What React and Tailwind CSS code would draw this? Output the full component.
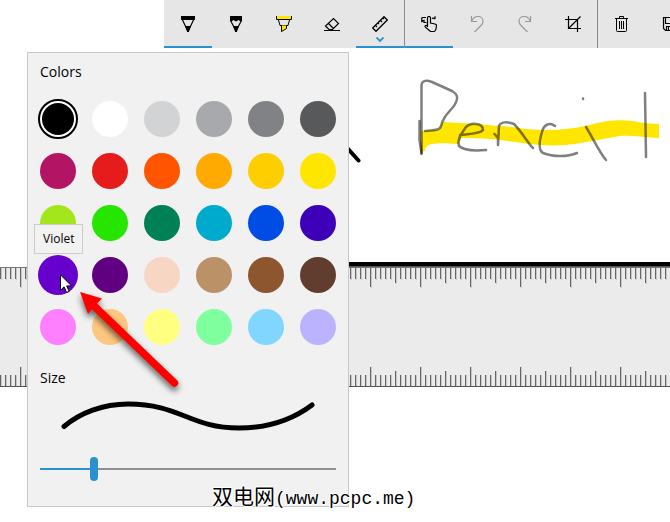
import { useState } from 'react';

const swatches = [
  { name: 'Black', color: 'bg-black' },
  { name: 'White', color: 'bg-white' },
  { name: 'Light gray', color: 'bg-[#d1d3d4]' },
  { name: 'Gray', color: 'bg-[#a7a9ac]' },
  { name: 'Medium gray', color: 'bg-[#808285]' },
  { name: 'Dark gray', color: 'bg-[#58595b]' },
  { name: 'Magenta', color: 'bg-[#b31564]' },
  { name: 'Red', color: 'bg-[#e61b1b]' },
  { name: 'Red orange', color: 'bg-[#ff5500]' },
  { name: 'Orange', color: 'bg-[#ffaa00]' },
  { name: 'Gold', color: 'bg-[#ffce00]' },
  { name: 'Yellow', color: 'bg-[#ffe600]' },
  { name: 'Grass green', color: 'bg-[#a2e61b]' },
  { name: 'Green', color: 'bg-[#26e600]' },
  { name: 'Dark green', color: 'bg-[#008055]' },
  { name: 'Teal', color: 'bg-[#00aacc]' },
  { name: 'Blue', color: 'bg-[#004de6]' },
  { name: 'Indigo', color: 'bg-[#3d00b8]' },
  { name: 'Violet', color: 'bg-[#6600cc]' },
  { name: 'Purple', color: 'bg-[#600080]' },
  { name: 'Beige', color: 'bg-[#f7d7c4]' },
  { name: 'Light brown', color: 'bg-[#bb9167]' },
  { name: 'Brown', color: 'bg-[#8e562e]' },
  { name: 'Dark brown', color: 'bg-[#613d30]' },
  { name: 'Pastel pink', color: 'bg-[#ff80ff]' },
  { name: 'Pastel orange', color: 'bg-[#ffc680]' },
  { name: 'Pastel yellow', color: 'bg-[#ffff80]' },
  { name: 'Pastel green', color: 'bg-[#80ff9e]' },
  { name: 'Pastel blue', color: 'bg-[#80d6ff]' },
  { name: 'Pastel purple', color: 'bg-[#bcb3ff]' },
];

const Icon = ({ children }) => (
  <svg viewBox="0 0 16 16" className="w-4 h-4" fill="none" stroke="currentColor" aria-hidden="true">
    {children}
  </svg>
);

const PenIcon = () => (
  <Icon>
    <path d="M1 0h14v4H1z" fill="#000" stroke="none" />
    <path d="M2.5 4L7 13.5h2L13.5 4" strokeWidth="1.2" />
    <path d="M5 10h6l-2.2 6H7.2z" fill="#000" stroke="none" />
  </Icon>
);

const PencilIcon = () => (
  <Icon>
    <path d="M2 0h12v5l-1.5.5L10.5 4 8 5.5 5.5 4 3.5 5.5 2 5z" fill="#000" stroke="none" />
    <path d="M2.5 4.5L7 13h2l4.5-8.5" strokeWidth="1.2" />
    <path d="M5 10h6l-2.2 6H7.2z" fill="#000" stroke="none" />
  </Icon>
);

const HighlighterIcon = () => (
  <Icon>
    <path d="M0 0h16v4H0z" fill="#ffe600" stroke="none" />
    <path d="M.5 0v3.5h15V0" />
    <path d="M2.5 4l1.5 5.5h8L13.5 4" />
    <path d="M5.5 9.5v6l5-3v-3" fill="#ffe600" />
  </Icon>
);

const EraserIcon = () => (
  <Icon>
    <path d="M0 14.5h16" />
    <path d="M5 13.5L1.5 10 9.5 2.5l5 5-6 6H5M4.5 7.5l5 5" strokeWidth="1.2" />
  </Icon>
);

const RulerIcon = () => (
  <Icon>
    <path d="M.7 12L12 .7 15.3 4 4 15.3z" strokeWidth="1.3" />
    <path d="M3.5 9.5L5 11M6 7l1 1M8.5 4.5L10 6M11 2l1 1" strokeWidth="1.2" />
  </Icon>
);

const TouchIcon = () => (
  <Icon>
    <path d="M6.5 11V2c0-2 3-2 3 0v5l4.5 1c1.2.3 1.7 1 1.5 2.2l-.7 3.3c-.3 1.3-1 2-2.3 2H9.5L4.2 11C3.5 9.500 5 8.800 6.500 10" strokeWidth="1.2" />
    <path d="M5.500 6.500H3V4.500L.8 5.500V2.500Q.8 1.500 2 1.500h3M11 2.500c1.500-1 2 .5 3 0V.2" strokeWidth="1.2" />
  </Icon>
);

const UndoIcon = () => (
  <Icon>
    <path d="M2.5 0v5.5H8M2.5 5.5C4 2 6.500.5 9 .5c3 0 5 2.2 5 5 0 1.500-.7 2.800-2 4L5.500 16" strokeWidth="1.2" />
  </Icon>
);

const CropIcon = () => (
  <Icon>
    <path d="M0 3.5h12.5V16M3.5 0v12.5H16M3.5 12.5l12-12" strokeWidth="1.2" />
  </Icon>
);

const TrashIcon = () => (
  <Icon>
    <path d="M1 2.5h13M5.5 2.5v-2h4v2M2.5 2.5v12q0 1 1 1h8q1 0 1-1v-12M5.5 5v8M7.5 5v8M9.5 5v8" />
  </Icon>
);

const SaveIcon = () => (
  <Icon>
    <path d="M1.5 1.5h13v13h-11l-2-2zM3.5 1.5v6h9v-6M4.5 14.5v-4h7v4M6.5 11v3" strokeWidth="1.2" />
  </Icon>
);

const ToolButton = ({ label, active, muted, children }) => (
  <button
    type="button"
    aria-label={label}
    disabled={muted}
    className={`relative flex w-12 h-12 shrink-0 items-center justify-center border-b-2 border-t-2 border-t-transparent ${
      active ? 'border-b-[#2a91cf]' : 'border-b-transparent'
    } ${muted ? 'text-[#999999]' : 'text-black'}`}
  >
    {children}
  </button>
);

const Separator = () => <div className="w-px shrink-0 bg-[#8a8a8a]" />;

const Toolbar = () => (
  <header className="flex h-12 ml-[164px] overflow-hidden bg-[#e6e6e6]">
    <ToolButton label="Ballpoint pen" active><PenIcon /></ToolButton>
    <ToolButton label="Pencil"><PencilIcon /></ToolButton>
    <ToolButton label="Highlighter"><HighlighterIcon /></ToolButton>
    <ToolButton label="Eraser"><EraserIcon /></ToolButton>
    <ToolButton label="Ruler" active>
      <RulerIcon />
      <svg viewBox="0 0 8 5" className="absolute bottom-1 w-2 h-[5px]" fill="none" aria-hidden="true">
        <path d="M.5 .5L4 4 7.5 .5" stroke="#2a91cf" strokeWidth="1.8" />
      </svg>
    </ToolButton>
    <Separator />
    <ToolButton label="Touch writing" active><TouchIcon /></ToolButton>
    <ToolButton label="Undo" muted><UndoIcon /></ToolButton>
    <ToolButton label="Redo" muted>
      <span className="-scale-x-100"><UndoIcon /></span>
    </ToolButton>
    <ToolButton label="Crop"><CropIcon /></ToolButton>
    <Separator />
    <ToolButton label="Clear all"><TrashIcon /></ToolButton>
    <ToolButton label="Save as"><SaveIcon /></ToolButton>
  </header>
);

// Handwritten strokes on the sketch canvas
const Ink = () => (
  <svg
    viewBox="340 48 330 214"
    className="block w-[330px] h-[214px] ml-[340px]"
    fill="none"
    strokeLinecap="round"
    strokeLinejoin="round"
    aria-hidden="true"
  >
    <path d="M340 140l18.5 20.5" stroke="#000" strokeWidth="4" />
    <path
      d="M421 131L439 130 443 122C465 123 490 125 512 127C535 131 562 131 585 126C605 121 615 119 632 121C642 123 650 124 659 124V138C645 138 633 135 620 136C600 139 585 143 565 145C535 147 515 141 490 139C480 138 470 138 461 138L458 144C445 143 437 143 432 144C427 145 425 147 425 151L421 152Z"
      fill="#ffe600"
    />
    <g stroke="#000" strokeOpacity=".5" strokeWidth="2.5">
      <path d="M421.5 154V85C422 80 427 80 432 82L452 91C459 95 458 99 454 106C447 114 443 118 441 126C440 130 436 130 425 131" />
      <path d="M419.5 121V140L421.5 153" />
      <path d="M460 135C468 134 480 134 483 130C483 123 471 122 466 127C461 134 457 140 459 146C464 151 474 151 486 150" />
      <path d="M494.5 134L498 138V145M498 145L499 126C501 121 509 122 514 124C522 132 527 142 533 148" />
      <path d="M555 126C550 122 544 124 542 132C539 142 538 150 543 153C553 157 568 157 577 153" />
      <path d="M586 127C593 138 599 152 606 160" />
      <path d="M583 98.5v.5" />
      <path d="M645 93L646 157" />
    </g>
  </svg>
);

const Ruler = () => (
  <svg className="block w-full h-[125px]" aria-hidden="true">
    <defs>
      <pattern id="ticks" width="50" height="120" patternUnits="userSpaceOnUse" patternTransform="translate(20 5)">
        {[0, 1, 2, 3, 4, 5, 6, 7, 8, 9].map((i) => {
          const length = i === 0 ? 19 : i === 5 ? 15 : 11;
          return (
            <g key={i}>
              <rect x={i * 5 + 1} y="1" width="1" height={length + 1} fill="#c6c6c6" />
              <rect x={i * 5 + 1} y={119 - length} width="1" height={length} fill="#c6c6c6" />
              <rect x={i * 5} y="1" width="1" height={length} fill="#666" />
              <rect x={i * 5} y={119 - length} width="1" height={length} fill="#666" />
            </g>
          );
        })}
      </pattern>
    </defs>
    <rect y="5" width="100%" height="120" fill="#ebebeb" />
    <rect y="5" width="100%" height="120" fill="url(#ticks)" />
    <rect y="5" width="100%" height="1" fill="#777" />
    <rect y="124" width="100%" height="1" fill="#555" />
    <rect x="340" width="100%" height="4" fill="#000" />
    <rect x="340" y="4" width="100%" height="1" fill="#555" />
  </svg>
);

const BrushPreview = () => (
  <svg viewBox="0 2 296 58" className="block w-full h-[58px]" fill="none" aria-hidden="true">
    <path
      d="M24 37.5C40 24 63 15 88 15C140 15 150 39 199 39C228 39 252 31 272 16"
      stroke="#000"
      strokeWidth="5"
      strokeLinecap="round"
    />
  </svg>
);

const Cursor = () => (
  <svg viewBox="0 0 12 19" className="absolute left-[60px] top-[274px] w-3 h-[19px]" aria-hidden="true">
    <path d="M.5 .8v15.5l3.6-3.4 2.5 5.6 2.6-1.2-2.5-5.400h4.800z" fill="#fff" stroke="#000" />
  </svg>
);

const PointerArrow = () => (
  <svg
    viewBox="0 0 120 120"
    className="absolute left-[70px] top-[280px] w-[120px] h-[120px] pointer-events-none drop-shadow-[0_4px_3px_rgba(0,0,0,0.6)]"
    aria-hidden="true"
  >
    <path d="M22 24L104.5 103" stroke="#f00" strokeWidth="7.5" strokeLinecap="round" />
    <path d="M10 12L32 18.500 25 25.500 18 34z" fill="#f00" />
  </svg>
);

const PenPanel = () => {
  const [color, setColor] = useState('Black');
  const [hovered, setHovered] = useState('Violet');
  const [size, setSize] = useState(5);
  const percent = ((size - 1) / 23) * 100;

  return (
    <section className="absolute left-[27px] top-[52px] w-[322px] border border-[#c8c8c8] bg-[#f1f1f1] px-3 pt-2 pb-[25px]">
      <fieldset>
        <legend className="text-sm leading-[22px] text-black">Colors</legend>
        <div className="grid grid-cols-6 gap-4 mt-[18px]">
          {swatches.map((swatch) => (
            <div key={swatch.name} className="relative flex w-9 h-9 items-center justify-center">
              <input
                type="radio"
                name="color"
                aria-label={swatch.name}
                checked={color === swatch.name}
                onChange={() => setColor(swatch.name)}
                onMouseEnter={() => setHovered(swatch.name)}
                className={`appearance-none shrink-0 rounded-full ${swatch.color} ${
                  color === swatch.name
                    ? 'w-8 h-8 ring-2 ring-white outline-2 outline-offset-2 outline-black'
                    : hovered === swatch.name
                      ? 'w-10 h-10'
                      : 'w-9 h-9'
                }`}
              />
              {hovered === swatch.name && (
                <div
                  role="tooltip"
                  className="absolute bottom-[39px] -left-1.5 z-10 border border-[#cccccc] bg-[#f2f2f2] px-2 py-1.5 text-xs leading-4 text-black"
                >
                  {swatch.name}
                </div>
              )}
            </div>
          ))}
        </div>
      </fieldset>

      <label htmlFor="size" className="block mt-5 text-sm leading-[26px] text-black">Size</label>
      <BrushPreview />
      <input
        id="size"
        type="range"
        min="1"
        max="24"
        value={size}
        onChange={(e) => setSize(Number(e.target.value))}
        className="block w-full h-6 mt-2 appearance-none bg-[length:100%_2px] bg-center bg-no-repeat [&::-webkit-slider-thumb]:appearance-none [&::-webkit-slider-thumb]:w-2 [&::-webkit-slider-thumb]:h-6 [&::-webkit-slider-thumb]:rounded-full [&::-webkit-slider-thumb]:bg-[#2a91cf]"
        style={{ backgroundImage: `linear-gradient(to right, #2a91cf ${percent}%, #8f8f8f ${percent}%)` }}
      />
    </section>
  );
};

const App = () => (
  <div className="relative min-h-screen overflow-hidden bg-white font-['Open_Sans','Noto_Sans',sans-serif]">
    <Toolbar />
    <main>
      <Ink />
      <Ruler />
    </main>
    <PenPanel />
    <Cursor />
    <PointerArrow />
    <p className="absolute left-[212px] top-[481px] whitespace-nowrap text-[21px] leading-7 text-black font-['Noto_Sans_CJK_SC',sans-serif] [text-shadow:1px_0_#fff,-1px_0_#fff,0_1px_#fff,0_-1px_#fff,1px_1px_#fff,-1px_-1px_#fff]">
      双电网<span className="text-lg leading-7 font-['Liberation_Mono',monospace]">(www.pcpc.me)</span>
    </p>
  </div>
);

export default App;
